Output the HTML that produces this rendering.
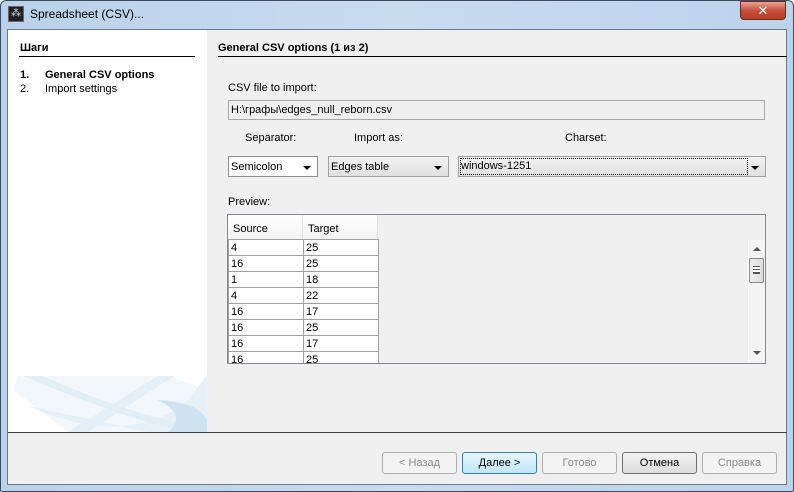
<!DOCTYPE html>
<html><head><meta charset="utf-8"><style>
*{margin:0;padding:0;box-sizing:border-box}
body{width:794px;height:492px;overflow:hidden;font-family:"Liberation Sans","DejaVu Sans",sans-serif;font-size:11px;color:#000;background:#fff}
.a{position:absolute}
#win{left:0;top:0;width:794px;height:492px;background:linear-gradient(90deg,#b9d1ea,#c8dcf0 50%,#bcd3ec);border:1px solid #3c4c60;border-radius:6px 6px 2px 2px}
.dd{background:#fff;border:1px solid #8f8f8f;height:21px;line-height:21px;padding-left:2px;font-size:11px}
.dd2{background:linear-gradient(#f2f2f2,#e0e0e0);border:1px solid #a0a0a0}
.arr{position:absolute;right:6px;top:9px;width:0;height:0;border-left:4px solid transparent;border-right:4px solid transparent;border-top:4px solid #000}
.btn{top:452px;height:22px;width:75px;border:1px solid #adadad;border-radius:3px;background:#f4f4f4;text-align:center;line-height:20px;color:#8a8a8a}
td{border:1px solid #a0a0a0;height:16px;padding:0 2px;line-height:14px;width:75px;background:#fff}
</style></head><body>
<div id="win" class="a"></div>
<div class="a" style="left:8px;top:6px;width:16px;height:16px;background:#222;border:1px solid #666;color:#ddd;font-size:10px;line-height:14px;text-align:center">⁂</div>
<div class="a" style="left:30px;top:7px;font-size:12px;color:#000">Spreadsheet (CSV)...</div>
<div class="a" style="left:740px;top:1px;width:46px;height:19px;border:1px solid #6b2a1c;border-radius:0 0 4px 4px;background:linear-gradient(#e8a496,#c9503a 50%,#b83a25);color:#fff;font-weight:bold;text-align:center;line-height:17px;font-size:13px">✕</div>
<div class="a" style="left:7px;top:29px;width:780px;height:456px;background:#f0f0f0;border:1px solid #6a7a8c"></div>
<div class="a" style="left:8px;top:30px;width:199px;height:402px;background:#fff;overflow:hidden">
<svg width="199" height="402" style="position:absolute;left:0;top:0">
<path d="M10 346 L160 346 L199 360 L199 402 L60 402 L5 360Z" fill="#f2f7fb"/>
<path d="M20 376 Q120 420 180 370 L199 345 L199 402 L140 402Z" fill="#e6f0f7"/>
<path d="M150 346 L60 402 L80 402 L166 346Z" fill="#e4eff7"/>
<path d="M15 346 Q120 390 170 400 L180 395 Q110 380 35 346Z" fill="#e2eef6"/>
<path d="M150 370 Q190 372 199 390 L199 402 L160 402 Q180 385 150 370Z" fill="#cfe4f0"/>
</svg></div>
<div class="a" style="left:20px;top:42px;font-weight:bold">Шаги</div>
<div class="a" style="left:19px;top:56px;width:176px;border-top:1px solid #000"></div>
<div class="a" style="left:20px;top:69px;font-weight:bold">1.</div>
<div class="a" style="left:45px;top:69px;font-weight:bold">General CSV options</div>
<div class="a" style="left:20px;top:83px">2.</div>
<div class="a" style="left:45px;top:83px">Import settings</div>
<div class="a" style="left:218px;top:42px;font-weight:bold">General CSV options (1 из 2)</div>
<div class="a" style="left:218px;top:56px;width:569px;border-top:1px solid #000"></div>
<div class="a" style="left:228px;top:82px">CSV file to import:</div>
<div class="a" style="left:228px;top:100px;width:537px;height:20px;border:1px solid #a8a8a8;background:#f0f0f0;line-height:18px;padding-left:2px">H:\графы\edges_null_reborn.csv</div>
<div class="a" style="left:245px;top:132px">Separator:</div>
<div class="a" style="left:354px;top:132px">Import as:</div>
<div class="a" style="left:565px;top:132px">Charset:</div>
<div class="a dd" style="left:228px;top:156px;width:90px">Semicolon<span class="arr"></span></div>
<div class="a dd dd2" style="left:328px;top:156px;width:121px">Edges table<span class="arr"></span></div>
<div class="a dd dd2" style="left:458px;top:156px;width:308px;padding-top:2px;line-height:normal"><span style="outline:1px dotted #000;display:inline-block;width:286px;line-height:15px">windows-1251</span><span class="arr"></span></div>
<div class="a" style="left:228px;top:196px">Preview:</div>
<div class="a" style="left:227px;top:214px;width:539px;height:150px;border:1px solid #828790;background:#f0f0f0;overflow:hidden">
<div class="a" style="left:0;top:0;width:150px;height:24px;display:flex">
<div style="width:75px;background:linear-gradient(#fff,#f3f3f3);border-right:1px solid #e0e0e0;padding:8px 0 0 5px">Source</div>
<div style="width:75px;background:linear-gradient(#fff,#f3f3f3);border-right:1px solid #e0e0e0;padding:8px 0 0 5px">Target</div></div>
<table class="a" style="left:0;top:24px;border-collapse:collapse">
<tr><td>4</td><td>25</td></tr><tr><td>16</td><td>25</td></tr><tr><td>1</td><td>18</td></tr><tr><td>4</td><td>22</td></tr><tr><td>16</td><td>17</td></tr><tr><td>16</td><td>25</td></tr><tr><td>16</td><td>17</td></tr><tr><td>16</td><td>25</td></tr></table>
<div class="a" style="left:520px;top:25px;width:17px;height:124px;background:#f4f4f4;border-left:1px solid #fff"></div>
<div class="a" style="left:525px;top:32px;border-left:4px solid transparent;border-right:4px solid transparent;border-bottom:4px solid #555"></div>
<div class="a" style="left:521px;top:43px;width:15px;height:25px;border:1px solid #888;border-radius:2px;background:linear-gradient(90deg,#eee,#dcdcdc)"><div style="margin:7px 3px;height:8px;border-top:1px solid #555;border-bottom:1px solid #555;background:linear-gradient(#fff 0,#fff 2px,#555 2px,#555 3px,#fff 3px,#fff 5px,#555 5px,#555 6px,#fff 6px)"></div></div>
<div class="a" style="left:525px;top:136px;border-left:4px solid transparent;border-right:4px solid transparent;border-top:4px solid #555"></div>
</div>
<div class="a" style="left:8px;top:432px;width:779px;border-top:1px solid #404040"></div>
<div class="a btn" style="left:382px">&lt; Назад</div>
<div class="a btn" style="left:462px;border-color:#3c7fb1;background:linear-gradient(#eaf6fd,#bee6fd);color:#000">Далее &gt;</div>
<div class="a btn" style="left:542px">Готово</div>
<div class="a btn" style="left:622px;border-color:#707070;background:linear-gradient(#f2f2f2,#dddddd);color:#000">Отмена</div>
<div class="a btn" style="left:702px">Справка</div>
</body></html>
